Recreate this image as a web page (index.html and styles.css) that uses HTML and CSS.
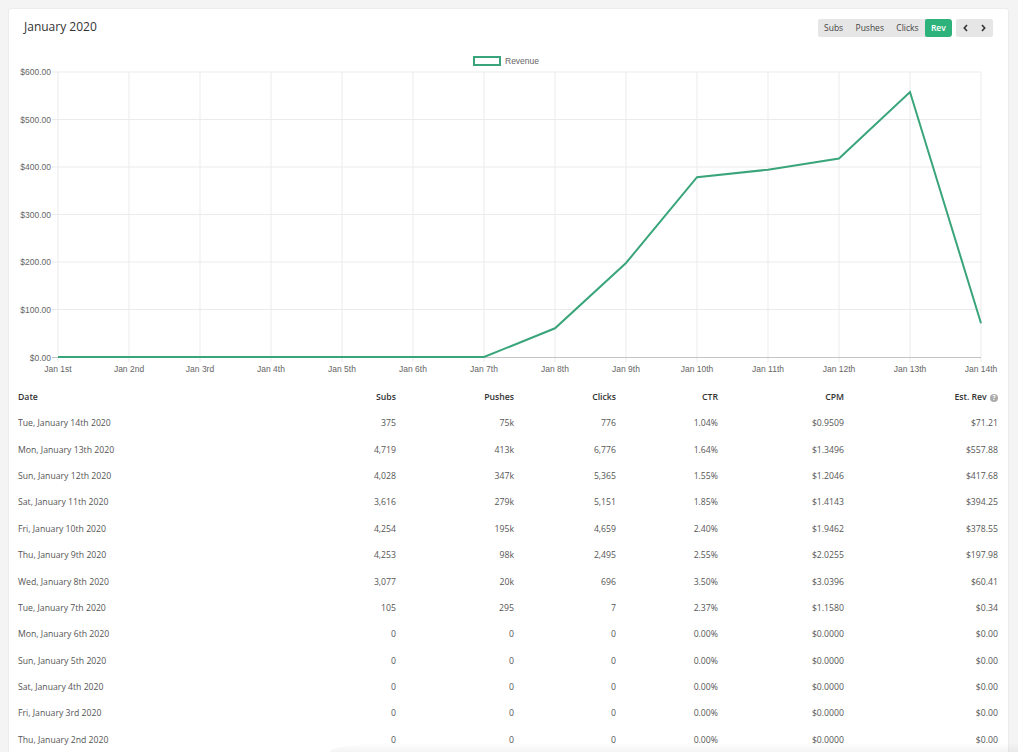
FILE: index.html
```html
<!DOCTYPE html>
<html lang="en">
<head>
<meta charset="utf-8">
<title>January 2020</title>
<link rel="stylesheet" href="styles.css">
</head>
<body>
<div class="card">
  <div class="card-header">
    <h1 class="title">January 2020</h1>
    <div class="toolbar">
      <div class="btn-group">
        <button class="btn">Subs</button>
        <button class="btn">Pushes</button>
        <button class="btn">Clicks</button>
        <button class="btn active">Rev</button>
      </div>
      <div class="btn-group nav">
        <button class="btn nav-btn" aria-label="Previous"><svg width="5" height="8" viewBox="0 0 5 8"><path d="M4 1 L1.3 4 L4 7" fill="none" stroke="#333" stroke-width="1.6"/></svg></button>
        <button class="btn nav-btn" aria-label="Next"><svg width="5" height="8" viewBox="0 0 5 8"><path d="M1 1 L3.7 4 L1 7" fill="none" stroke="#333" stroke-width="1.6"/></svg></button>
      </div>
    </div>
  </div>

  <svg class="chart" width="999" height="343" viewBox="9 37 999 343" xmlns="http://www.w3.org/2000/svg">
    <g class="legend">
      <rect x="474" y="57" width="26" height="8" fill="#fff" stroke="#3aa57b" stroke-width="2"/>
      <text x="505" y="64">Revenue</text>
    </g>
    <g class="grid">
      <line x1="52" y1="72" x2="981" y2="72"/>
      <line x1="52" y1="119.5" x2="981" y2="119.5"/>
      <line x1="52" y1="167" x2="981" y2="167"/>
      <line x1="52" y1="214.5" x2="981" y2="214.5"/>
      <line x1="52" y1="262" x2="981" y2="262"/>
      <line x1="52" y1="309.5" x2="981" y2="309.5"/>
      <line x1="58" y1="72" x2="58" y2="362"/>
      <line x1="129" y1="72" x2="129" y2="362"/>
      <line x1="200" y1="72" x2="200" y2="362"/>
      <line x1="271" y1="72" x2="271" y2="362"/>
      <line x1="342" y1="72" x2="342" y2="362"/>
      <line x1="413" y1="72" x2="413" y2="362"/>
      <line x1="484" y1="72" x2="484" y2="362"/>
      <line x1="555" y1="72" x2="555" y2="362"/>
      <line x1="626" y1="72" x2="626" y2="362"/>
      <line x1="697" y1="72" x2="697" y2="362"/>
      <line x1="768" y1="72" x2="768" y2="362"/>
      <line x1="839" y1="72" x2="839" y2="362"/>
      <line x1="910" y1="72" x2="910" y2="362"/>
      <line x1="981" y1="72" x2="981" y2="362"/>
    </g>
    <line class="zero" x1="52" y1="357.5" x2="981" y2="357.5"/>
    <g class="ylabels">
      <text x="51" y="75">$600.00</text>
      <text x="51" y="122.5">$500.00</text>
      <text x="51" y="170">$400.00</text>
      <text x="51" y="217.5">$300.00</text>
      <text x="51" y="265">$200.00</text>
      <text x="51" y="312.5">$100.00</text>
      <text x="51" y="360.5">$0.00</text>
    </g>
    <g class="xlabels">
      <text x="58" y="372">Jan 1st</text>
      <text x="129" y="372">Jan 2nd</text>
      <text x="200" y="372">Jan 3rd</text>
      <text x="271" y="372">Jan 4th</text>
      <text x="342" y="372">Jan 5th</text>
      <text x="413" y="372">Jan 6th</text>
      <text x="484" y="372">Jan 7th</text>
      <text x="555" y="372">Jan 8th</text>
      <text x="626" y="372">Jan 9th</text>
      <text x="697" y="372">Jan 10th</text>
      <text x="768" y="372">Jan 11th</text>
      <text x="839" y="372">Jan 12th</text>
      <text x="910" y="372">Jan 13th</text>
      <text x="981" y="372">Jan 14th</text>
    </g>
    <polyline class="series" points="58,357 129,357 200,357 271,357 342,357 413,357 484,357 555,328.3 626,263 697,177.2 768,169.7 839,158.6 910,92 981,323.2"/>
  </svg>

  <div class="table-wrap">
    <table class="stats">
      <colgroup>
        <col class="c-date"><col class="c-subs"><col class="c-push"><col class="c-click"><col class="c-ctr"><col class="c-cpm"><col class="c-rev">
      </colgroup>
      <thead>
        <tr><th class="left">Date</th><th>Subs</th><th>Pushes</th><th>Clicks</th><th>CTR</th><th>CPM</th><th>Est. Rev <span class="help">?</span></th></tr>
      </thead>
      <tbody>
        <tr><td class="left">Tue, January 14th 2020</td><td>375</td><td>75k</td><td>776</td><td>1.04%</td><td>$0.9509</td><td>$71.21</td></tr>
        <tr><td class="left">Mon, January 13th 2020</td><td>4,719</td><td>413k</td><td>6,776</td><td>1.64%</td><td>$1.3496</td><td>$557.88</td></tr>
        <tr><td class="left">Sun, January 12th 2020</td><td>4,028</td><td>347k</td><td>5,365</td><td>1.55%</td><td>$1.2046</td><td>$417.68</td></tr>
        <tr><td class="left">Sat, January 11th 2020</td><td>3,616</td><td>279k</td><td>5,151</td><td>1.85%</td><td>$1.4143</td><td>$394.25</td></tr>
        <tr><td class="left">Fri, January 10th 2020</td><td>4,254</td><td>195k</td><td>4,659</td><td>2.40%</td><td>$1.9462</td><td>$378.55</td></tr>
        <tr><td class="left">Thu, January 9th 2020</td><td>4,253</td><td>98k</td><td>2,495</td><td>2.55%</td><td>$2.0255</td><td>$197.98</td></tr>
        <tr><td class="left">Wed, January 8th 2020</td><td>3,077</td><td>20k</td><td>696</td><td>3.50%</td><td>$3.0396</td><td>$60.41</td></tr>
        <tr><td class="left">Tue, January 7th 2020</td><td>105</td><td>295</td><td>7</td><td>2.37%</td><td>$1.1580</td><td>$0.34</td></tr>
        <tr><td class="left">Mon, January 6th 2020</td><td>0</td><td>0</td><td>0</td><td>0.00%</td><td>$0.0000</td><td>$0.00</td></tr>
        <tr><td class="left">Sun, January 5th 2020</td><td>0</td><td>0</td><td>0</td><td>0.00%</td><td>$0.0000</td><td>$0.00</td></tr>
        <tr><td class="left">Sat, January 4th 2020</td><td>0</td><td>0</td><td>0</td><td>0.00%</td><td>$0.0000</td><td>$0.00</td></tr>
        <tr><td class="left">Fri, January 3rd 2020</td><td>0</td><td>0</td><td>0</td><td>0.00%</td><td>$0.0000</td><td>$0.00</td></tr>
        <tr><td class="left">Thu, January 2nd 2020</td><td>0</td><td>0</td><td>0</td><td>0.00%</td><td>$0.0000</td><td>$0.00</td></tr>
      </tbody>
    </table>
  </div>
</div>
<div class="bottom-shade"></div>
</body>
</html>
```

FILE: styles.css
```css
html, body {
  margin: 0;
  padding: 0;
}

body {
  background: #f4f4f4;
  padding: 8px 0 0 8px;
  font-family: "Open Sans", "Liberation Sans", sans-serif;
  color: #555;
  overflow: hidden;
}

.card {
  width: 999px;
  background: #fff;
  border: 1px solid #ececec;
  border-radius: 3px;
}

.card-header {
  display: flex;
  justify-content: space-between;
  align-items: center;
  padding: 9px 15px 0 15px;
  height: 19px;
}

.title {
  margin: 0;
  font-size: 12px;
  font-weight: 400;
  color: #333;
  line-height: 19px;
  position: relative;
  top: -1px;
}

.toolbar {
  display: flex;
  gap: 4px;
}

.btn-group {
  display: flex;
  border-radius: 3px;
  overflow: hidden;
  background: #e6e6e6;
}

.btn {
  border: 0;
  margin: 0;
  height: 18px;
  padding: 0 6.2px;
  background: #e6e6e6;
  color: #444;
  font-family: "Open Sans", "Liberation Sans", sans-serif;
  font-size: 8.5px;
  line-height: 18px;
  cursor: pointer;
}

.btn.active {
  background: #2db27b;
  color: #fff;
  font-weight: 600;
  border-radius: 2px;
}

.nav-btn {
  width: 18.5px;
  padding: 0;
  display: flex;
  align-items: center;
  justify-content: center;
}

.chart {
  display: block;
}

.chart text {
  font-family: "Liberation Sans", Arial, sans-serif;
  font-size: 8.5px;
  fill: #666;
}

.grid line {
  stroke: #ebebeb;
  stroke-width: 1;
}

.zero {
  stroke: #c4c4c4;
  stroke-width: 1;
}

.ylabels text {
  text-anchor: end;
}

.xlabels text {
  text-anchor: middle;
}

.series {
  fill: none;
  stroke: #3aa57b;
  stroke-width: 2;
  stroke-linejoin: miter;
}

.table-wrap {
  padding: 4px 10px 0 9px;
}

.stats {
  width: 980px;
  border-collapse: collapse;
  table-layout: fixed;
  font-size: 8.7px;
}

.c-date { width: 282px; }
.c-subs { width: 96px; }
.c-push { width: 118px; }
.c-click { width: 102px; }
.c-ctr { width: 102px; }
.c-cpm { width: 126px; }
.c-rev { width: 154px; }

.stats th,
.stats td {
  padding: 0;
  height: 26.4px;
  text-align: right;
  white-space: nowrap;
}

.stats th {
  font-weight: 600;
  color: #333;
  height: 26px;
}

.stats td {
  color: #555;
}

.stats .left {
  text-align: left;
}

.help {
  display: inline-block;
  width: 8px;
  height: 8px;
  border-radius: 50%;
  background: #aaa;
  color: #fff;
  font-size: 6.5px;
  line-height: 8px;
  text-align: center;
  font-weight: 700;
  vertical-align: 0;
  margin-left: 1px;
}

.bottom-shade {
  position: fixed;
  left: 330px;
  right: 0;
  bottom: 0;
  height: 9px;
  border-top-left-radius: 60px 9px;
  background: linear-gradient(to bottom, rgba(0,0,0,0), rgba(0,0,0,0.045));
  pointer-events: none;
}
```
